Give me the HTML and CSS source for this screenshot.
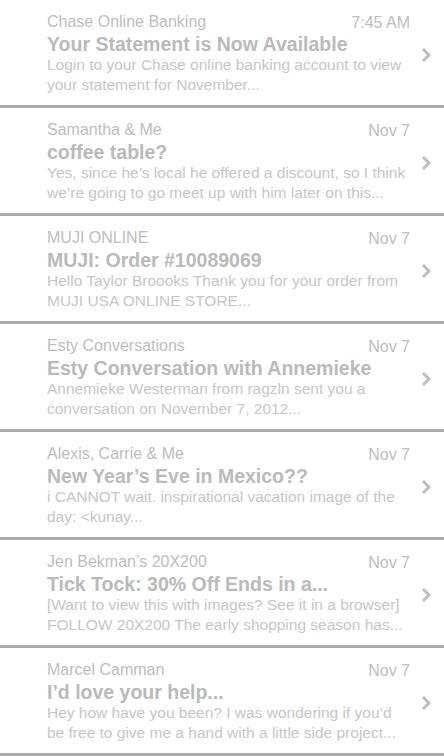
FILE: index.html
```html
<!DOCTYPE html>
<html>
<head>
<meta charset="utf-8">
<link rel="stylesheet" href="styles.css">
</head>
<body>
<ul class="list">
  <li class="row">
    <div class="body">
      <div class="top"><span class="from">Chase Online Banking</span><span class="date">7:45 AM</span></div>
      <div class="subject">Your Statement is Now Available</div>
      <div class="preview">Login to your Chase online banking account to view your statement for November...</div>
    </div>
    <svg class="chev" width="10" height="16" viewBox="0 0 10 16"><polyline points="2,2 8,8 2,14" fill="none" stroke="#bdbdbd" stroke-width="3"/></svg>
  </li>
  <li class="row">
    <div class="body">
      <div class="top"><span class="from">Samantha &amp; Me</span><span class="date">Nov 7</span></div>
      <div class="subject">coffee table?</div>
      <div class="preview">Yes, since he’s local he offered a discount, so I think we’re going to go meet up with him later on this...</div>
    </div>
    <svg class="chev" width="10" height="16" viewBox="0 0 10 16"><polyline points="2,2 8,8 2,14" fill="none" stroke="#bdbdbd" stroke-width="3"/></svg>
  </li>
  <li class="row">
    <div class="body">
      <div class="top"><span class="from">MUJI ONLINE</span><span class="date">Nov 7</span></div>
      <div class="subject">MUJI: Order #10089069</div>
      <div class="preview">Hello Taylor Broooks Thank you for your order from MUJI USA ONLINE STORE...</div>
    </div>
    <svg class="chev" width="10" height="16" viewBox="0 0 10 16"><polyline points="2,2 8,8 2,14" fill="none" stroke="#bdbdbd" stroke-width="3"/></svg>
  </li>
  <li class="row">
    <div class="body">
      <div class="top"><span class="from">Esty Conversations</span><span class="date">Nov 7</span></div>
      <div class="subject">Esty Conversation with Annemieke</div>
      <div class="preview">Annemieke Westerman from ragzln sent you a conversation on November 7, 2012...</div>
    </div>
    <svg class="chev" width="10" height="16" viewBox="0 0 10 16"><polyline points="2,2 8,8 2,14" fill="none" stroke="#bdbdbd" stroke-width="3"/></svg>
  </li>
  <li class="row">
    <div class="body">
      <div class="top"><span class="from">Alexis, Carrie &amp; Me</span><span class="date">Nov 7</span></div>
      <div class="subject">New Year’s Eve in Mexico??</div>
      <div class="preview">i CANNOT wait. inspirational vacation image of the day: &lt;kunay...</div>
    </div>
    <svg class="chev" width="10" height="16" viewBox="0 0 10 16"><polyline points="2,2 8,8 2,14" fill="none" stroke="#bdbdbd" stroke-width="3"/></svg>
  </li>
  <li class="row">
    <div class="body">
      <div class="top"><span class="from">Jen Bekman’s 20X200</span><span class="date">Nov 7</span></div>
      <div class="subject">Tick Tock: 30% Off Ends in a...</div>
      <div class="preview">[Want to view this with images? See it in a browser] FOLLOW 20X200 The early shopping season has...</div>
    </div>
    <svg class="chev" width="10" height="16" viewBox="0 0 10 16"><polyline points="2,2 8,8 2,14" fill="none" stroke="#bdbdbd" stroke-width="3"/></svg>
  </li>
  <li class="row">
    <div class="body">
      <div class="top"><span class="from">Marcel Camman</span><span class="date">Nov 7</span></div>
      <div class="subject">I’d love your help...</div>
      <div class="preview">Hey how have you been? I was wondering if you’d be free to give me a hand with a little side project...</div>
    </div>
    <svg class="chev" width="10" height="16" viewBox="0 0 10 16"><polyline points="2,2 8,8 2,14" fill="none" stroke="#bdbdbd" stroke-width="3"/></svg>
  </li>
</ul>
</body>
</html>
```
FILE: styles.css
```css
html, body {
  margin: 0;
  padding: 0;
  background: #fff;
}
body {
  font-family: "Liberation Sans", Arial, sans-serif;
  color: #bdbdbd;
  overflow: hidden;
}
.list {
  list-style: none;
  margin: 0;
  padding: 0;
}
.row {
  box-sizing: border-box;
  height: 108px;
  border-bottom: 3px solid #aaaaaa;
  display: flex;
  align-items: center;
  padding: 0 13px 0 47px;
}
.body {
  flex: 1;
  min-width: 0;
  padding-top: 12px;
  align-self: flex-start;
}
.top {
  display: flex;
  justify-content: space-between;
  font-size: 16px;
  line-height: 20px;
  color: #bdbdbd;
}
.date {
  padding-top: 1px;
}
.subject {
  font-size: 19.5px;
  font-weight: bold;
  line-height: 22px;
  color: #bababa;
  white-space: nowrap;
}
.preview {
  font-size: 15.5px;
  line-height: 20px;
  color: #c6c6c6;
  padding-right: 4px;
}
.chev {
  flex: none;
  margin-left: 11px;
  margin-top: 4px;
}
```
